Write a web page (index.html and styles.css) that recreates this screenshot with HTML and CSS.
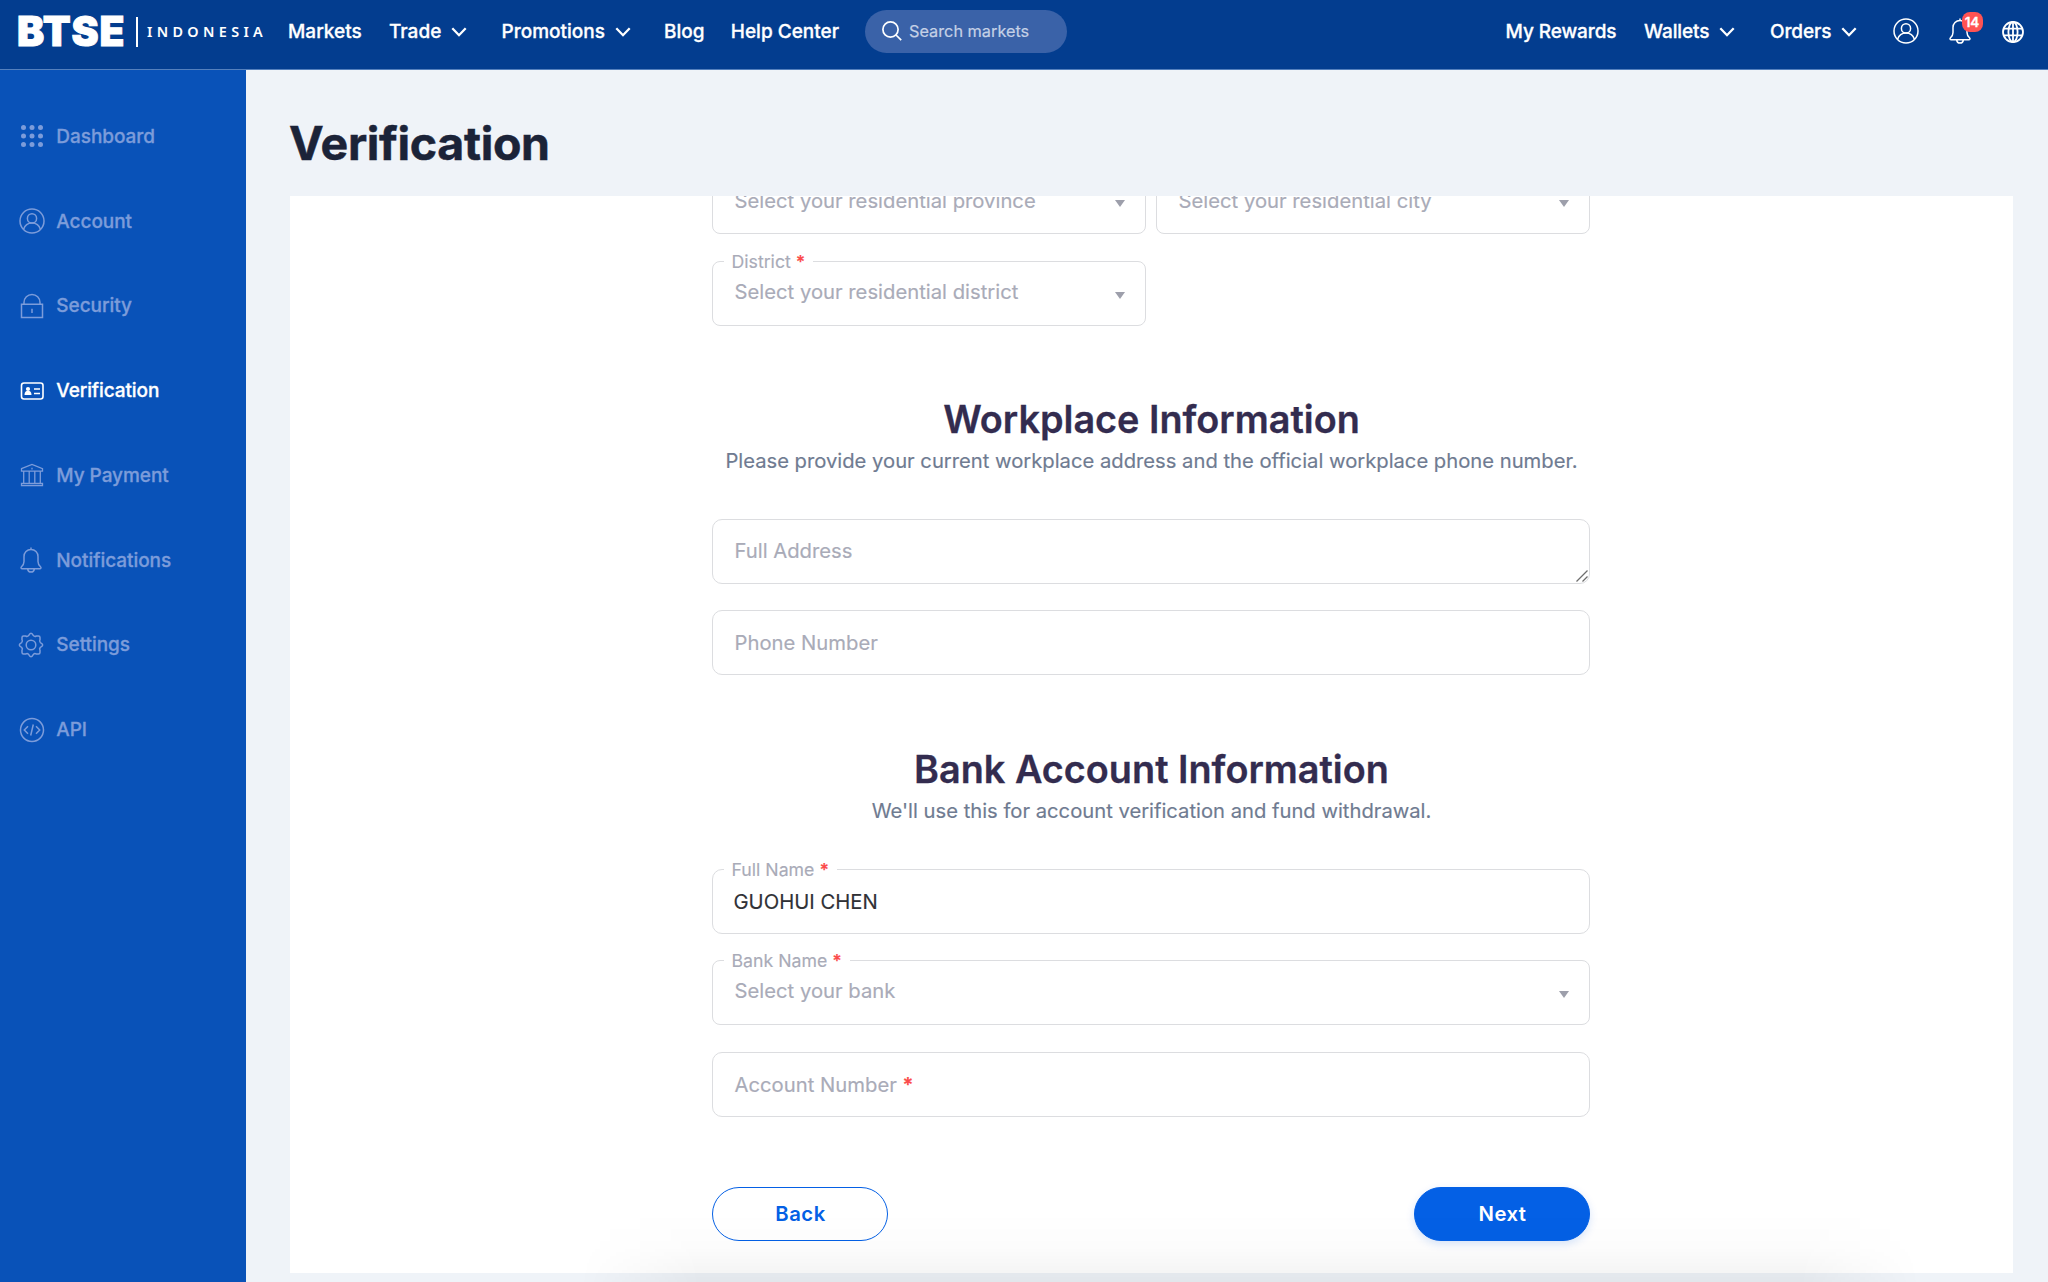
FILE: index.html
```html
<!DOCTYPE html>
<html lang="en">
<head>
<meta charset="utf-8">
<title>Verification</title>
<link rel="stylesheet" href="styles.css">
</head>
<body>
<svg class="defs" width="0" height="0">
  <symbol id="chevron" viewBox="0 0 16 10"><path d="M1.3 1.3 8 8.2l6.7-6.9" stroke-width="2.3"/></symbol>
  <symbol id="user" viewBox="0 0 26 26"><circle cx="13" cy="13" r="12"/><circle cx="13" cy="10.4" r="4.6"/><path d="M4.6 21.3c1.2-3.900 4.300-6.300 8.400-6.300s7.200 2.400 8.400 6.300"/></symbol>
  <symbol id="bell" viewBox="0 0 24 26"><path d="M12 .6v1.800M12 2.400c4.100 0 7 3.100 7 7.100v5c0 2.500 1 3.900 2.500 5.200.9.800.5 2-.7 2H3.200c-1.200 0-1.600-1.200-.7-2C4 18.400 5 17 5 14.500v-5c0-4 2.900-7.100 7-7.100zM8.600 21.800c.3 2 1.600 3.300 3.400 3.300s3.100-1.300 3.400-3.300"/></symbol>
</svg>

<header class="topbar">
  <div class="logo">
    <span class="logo-name">BTSE</span>
    <span class="logo-rule"></span>
    <span class="logo-region">INDONESIA</span>
  </div>
  <nav class="nav">
    <a class="nav-item markets">Markets</a>
    <a class="nav-item trade">Trade <svg class="chevron"><use href="#chevron"/></svg></a>
    <a class="nav-item promotions">Promotions <svg class="chevron"><use href="#chevron"/></svg></a>
    <a class="nav-item blog">Blog</a>
    <a class="nav-item help">Help Center</a>
  </nav>
  <div class="search">
    <svg class="search-icon" viewBox="0 0 20 20"><circle cx="8.500" cy="8.500" r="7.600"/><path d="M14 14l5.200 5.200"/></svg>
    <span>Search markets</span>
  </div>
  <nav class="nav nav-right">
    <a class="nav-item rewards">My Rewards</a>
    <a class="nav-item wallets">Wallets <svg class="chevron"><use href="#chevron"/></svg></a>
    <a class="nav-item orders">Orders <svg class="chevron"><use href="#chevron"/></svg></a>
    <a class="nav-icon"><svg class="user"><use href="#user"/></svg></a>
    <a class="nav-icon"><svg class="bell"><use href="#bell"/></svg><span class="badge">14</span></a>
    <svg class="globe" viewBox="0 0 22 22"><circle cx="11" cy="11" r="10"/><ellipse cx="11" cy="11" rx="4.600" ry="10"/><path d="M11 1v20M1.500 7.700h19M1.500 14.300h19"/></svg>
  </nav>
</header>

<div class="layout">
  <aside class="sidebar">
    <a class="side-item"><svg class="dots" viewBox="0 0 26 26"><circle cx="4.500" cy="4.500" r="2.500"/><circle cx="13" cy="4.500" r="2.500"/><circle cx="21.500" cy="4.500" r="2.500"/><circle cx="4.500" cy="13" r="2.500"/><circle cx="13" cy="13" r="2.500"/><circle cx="21.500" cy="13" r="2.500"/><circle cx="4.500" cy="21.500" r="2.500"/><circle cx="13" cy="21.500" r="2.500"/><circle cx="21.500" cy="21.500" r="2.500"/></svg>Dashboard</a>
    <a class="side-item"><svg><use href="#user"/></svg>Account</a>
    <a class="side-item"><svg viewBox="0 0 26 26"><path d="M2.500 11.300h21v13.200h-21zM5 11.300V9.500a8 8 0 0 1 16 0v1.800M13 15.800v4.200"/></svg>Security</a>
    <a class="side-item active"><svg viewBox="0 0 26 26"><rect x="2.500" y="5" width="21.500" height="16" rx="2.500" stroke-width="1.600"/><path d="M15 11h6M15 15.500h6" stroke-width="1.500"/><circle cx="9" cy="11" r="2.100" fill="currentColor" stroke="none"/><path d="M5.500 17c0-3 1.300-4.300 3.500-4.300s3.500 1.300 3.500 4.300z" fill="currentColor" stroke="none"/></svg>Verification</a>
    <a class="side-item"><svg viewBox="0 0 26 26"><path d="M2.500 6.700 13 2.500l10.500 4.200v2.500h-21zM2.500 21.300h21v2.200h-21zM4.700 9.200v12M10.200 9.200v12M15.800 9.200v12M21.300 9.200v12M13 5.700v1.800" stroke-width="1.300"/></svg>My Payment</a>
    <a class="side-item"><svg class="side-bell"><use href="#bell"/></svg>Notifications</a>
    <a class="side-item"><svg class="gear" viewBox="0 0 26 26"><circle cx="13" cy="13" r="4.800"/><path d="M10.600 3.600Q13-1 15.400 3.600 16.600 5 18.300 4h2.200Q22 4 22 5.500v2.200Q21 9.400 22.400 10.600 27 13 22.400 15.400 21 16.600 22 18.300v2.200Q22 22 20.500 22h-2.200Q16.600 21 15.400 22.400 13 27 10.600 22.400 9.400 21 7.700 22H5.500Q4 22 4 20.500v-2.200Q5 16.600 3.600 15.400-1 13 3.600 10.600 5 9.400 4 7.700V5.500Q4 4 5.500 4h2.200Q9.400 5 10.600 3.600z"/></svg>Settings</a>
    <a class="side-item"><svg viewBox="0 0 26 26"><circle cx="13" cy="13" r="11.500"/><path d="M9 9.300 5.300 13 9 16.700M17 9.300l3.700 3.700-3.700 3.700M14.300 7.500l-2.600 11"/></svg>API</a>
  </aside>

  <main class="content">
    <h1 class="title">Verification</h1>
    <section class="card">
      <form class="form">
        <div class="row region">
          <div class="field select"><span>Select your residential province</span><i class="arrow"></i></div>
          <div class="field select"><span>Select your residential city</span><i class="arrow"></i></div>
        </div>
        <div class="row">
          <div class="field select"><label class="label">District <b>*</b></label><span>Select your residential district</span><i class="arrow"></i></div>
          <div></div>
        </div>

        <h2 class="heading workplace">Workplace Information</h2>
        <p class="desc">Please provide your current workplace address and the official workplace phone number.</p>
        <div class="fields">
          <div class="field address">Full Address<svg class="grip" viewBox="0 0 14 14"><path d="M1.500 12.500l11-11M7.500 12.500l5-5"/></svg></div>
          <div class="field">Phone Number</div>
        </div>

        <h2 class="heading bank">Bank Account Information</h2>
        <p class="desc">We'll use this for account verification and fund withdrawal.</p>
        <div class="fields">
          <div class="field filled"><label class="label">Full Name <b>*</b></label>GUOHUI CHEN</div>
          <div class="field select"><label class="label">Bank Name <b>*</b></label><span>Select your bank</span><i class="arrow"></i></div>
          <div class="field">Account Number <b>*</b></div>
        </div>

        <div class="actions">
          <button type="button" class="btn back">Back</button>
          <button type="button" class="btn next">Next</button>
        </div>
      </form>
    </section>
  </main>
</div>
<div class="page-shade"></div>
</body>
</html>
```
FILE: styles.css
```css
* { box-sizing: border-box; }

body {
  margin: 0;
  width: 2048px;
  height: 1282px;
  overflow: hidden;
  position: relative;
  background: #eff3f8;
  font-family: Inter, "Liberation Sans", sans-serif;
}

svg { fill: none; stroke: currentColor; stroke-width: 1.5; overflow: visible; flex: none; }
.defs { position: absolute; }

.topbar {
  height: 70px;
  padding: 0 24px 7px 17px;
  display: flex;
  align-items: center;
  background: #033d8f;
  border-bottom: 1px solid #5480bd;
  color: #fff;
}

.logo { display: flex; align-items: center; width: 271px; }
.logo-name { font-size: 40.7px; font-weight: 900; line-height: 44px; width: 118.5px; padding-top: 2px; letter-spacing: .9px; -webkit-text-stroke: 1px; }
.logo-rule { width: 2px; height: 30px; margin-top: 1px; background: #fff; }
.logo-region { margin: 2px 0 0 9.5px; font: 600 14.4px/20px "Noto Sans", sans-serif; letter-spacing: 4.35px; }

.nav { display: flex; align-items: center; font-size: 19px; font-weight: 500; -webkit-text-stroke: .3px; letter-spacing: 0; }
.nav-item { display: flex; align-items: center; gap: 10px; white-space: nowrap; }
.nav-right { margin-left: auto; letter-spacing: -.1px; }
.chevron { width: 16px; height: 10px; margin-top: 1px; }
.markets { width: 101px; }
.trade { width: 112.500px; }
.promotions { width: 162.500px; }
.blog { width: 66.800px; }
.help { width: 134.200px; }
.rewards { width: 138.400px; }
.wallets { width: 126px; }
.orders { width: 124px; }
.trade, .orders { gap: 9.500px; }

.search {
  width: 202px;
  height: 43px;
  padding: 0 17px;
  border-radius: 22px;
  display: flex;
  align-items: center;
  gap: 7px;
  background: #3a62a8;
  color: #c5d1e6;
  font-size: 16.3px;
  -webkit-text-stroke: .2px;
}
.search-icon { width: 20px; height: 20px; color: #fff; stroke-width: 1.700; }

.nav-icon { position: relative; left: -1px; display: flex; width: 55px; }
.user { width: 26px; height: 26px; }
.bell { width: 24px; height: 26px; }
.nav-icon + .globe { margin-left: -2px; }
.globe { width: 22px; height: 22px; stroke-width: 1.800; margin-top: 1px; }
.badge {
  position: absolute;
  left: 13.5px;
  top: -6px;
  width: 21px;
  height: 20px;
  border-radius: 8px;
  background: #ff5353;
  font-size: 13.5px;
  font-weight: 600;
  line-height: 20px;
  text-align: center;
  letter-spacing: 0;
}

.layout { display: flex; height: 1212px; }

.sidebar { width: 246px; padding: 24px 0 0 19px; background: #0952b8; }
.side-item {
  height: 84.780px;
  display: flex;
  align-items: center;
  gap: 11.300px;
  color: #7c9cda;
  font-size: 19px;
  font-weight: 500;
  letter-spacing: -.05px;
  -webkit-text-stroke: .3px;
}
.side-item svg { width: 26px; height: 26px; }
.side-item .side-bell { width: 24px; margin-right: 2px; }
.side-item .gear { position: relative; left: -1px; }
.side-item .dots { fill: currentColor; stroke: none; }
.side-item.active { color: #fff; letter-spacing: -.1px; }

.content { flex: 1; padding: 43px 35px 0 43px; }
.title { margin: 0 0 23px; font-size: 46.500px; line-height: 60px; font-weight: 700; letter-spacing: -.35px; color: #1b2338; -webkit-text-stroke: .5px; }

.card { height: 1077px; margin-left: 1px; overflow: hidden; background: #fff; }
.form { width: 878px; margin: -27px 0 0 422px; }
.row { display: grid; grid-template-columns: 1fr 1fr; gap: 10px; margin-bottom: 27px; }

.field {
  position: relative;
  height: 65px;
  padding: 0 21.500px;
  display: flex;
  align-items: center;
  border: 1px solid #dcdde0;
  border-radius: 10px;
  color: #a9abb8;
  font-size: 20.250px;
  white-space: pre;
  -webkit-text-stroke: .15px;
}
.select { justify-content: space-between; border-radius: 8px; }
.select > span { position: relative; top: -2px; }
.region .select > span { top: -1px; }
.address { padding-bottom: 2px; }
.filled { padding-left: 20.500px; color: #303136; }
.field b { color: #fb4b4b; font-weight: 600; }
.label {
  position: absolute;
  left: 10.500px;
  top: -12px;
  padding: 0 8px;
  background: #fff;
  color: #a9abb8;
  font-size: 17.700px;
  line-height: 24px;
}
.arrow { border: 5.500px solid transparent; border-top: 7px solid #9d9fab; border-bottom: 0; margin-top: 4px; margin-right: -1px; }
.grip { position: absolute; right: 0; bottom: 0; width: 14px; height: 14px; color: #6d6d6d; stroke-width: 1.300; }

.heading { margin: 0 0 4px; padding-left: 1px; text-align: center; font-size: 37.800px; line-height: 46px; font-weight: 600; color: #332c4f; -webkit-text-stroke: .3px; }
.workplace { padding-top: 43px; }
.bank { padding-top: 70.500px; }
.desc { margin: 0 0 43px; padding-left: 1px; text-align: center; font-size: 20.220px; line-height: 30px; color: #6f7b91; -webkit-text-stroke: .15px; }
.fields { display: grid; gap: 26px; }
.bank ~ .fields { gap: 26.600px; }

.actions { display: flex; justify-content: space-between; margin-top: 70px; }
.btn {
  width: 176px;
  height: 54px;
  padding: 0 0 0 7px;
  border-radius: 27px;
  border: 1px solid #0460e5;
  font: 600 20.300px Inter, sans-serif;
  letter-spacing: .5px;
}
.back { background: transparent; color: #0460e5; }
.next { background: #0460e5; color: #fff; box-shadow: 0 3px 8px rgba(4, 96, 229, .16); }
.btn { padding: 0 0 0 1px; }

.page-shade {
  position: absolute;
  left: 580px;
  bottom: 0;
  width: 1340px;
  height: 70px;
  background: linear-gradient(to bottom, transparent, rgba(0, 0, 0, .012) 50%, rgba(0, 0, 0, .052));
  -webkit-mask-image: linear-gradient(to right, transparent, #000 9%, #000 91%, transparent);
  mask-image: linear-gradient(to right, transparent, #000 9%, #000 91%, transparent);
  pointer-events: none;
}
```
